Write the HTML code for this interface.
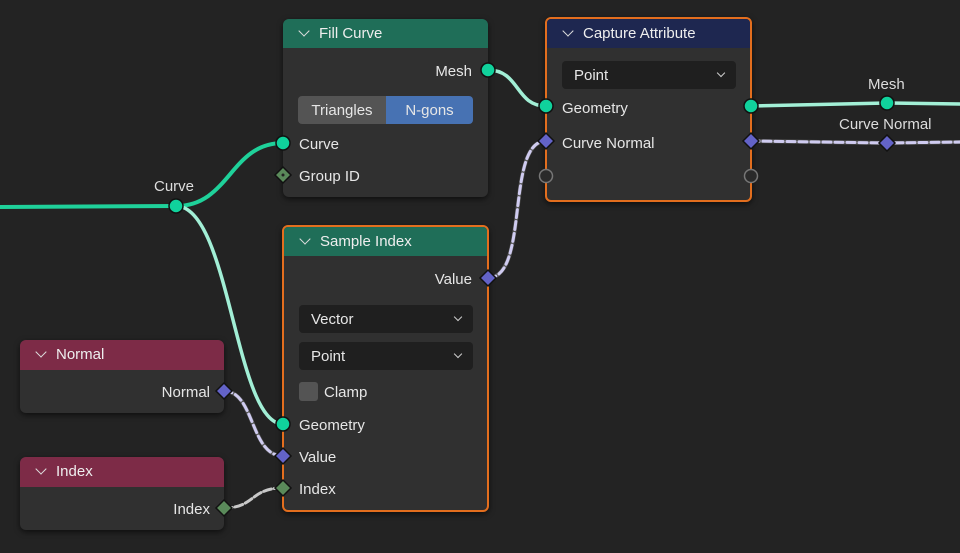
<!DOCTYPE html>
<html><head><style>
body{margin:0;width:960px;height:553px;background:#232323;overflow:hidden;position:relative;font-family:"Liberation Sans","DejaVu Sans",sans-serif;font-size:15px;color:#e6e6e6}
.node{position:absolute;background:#303030;border-radius:6px;box-shadow:0 2px 6px rgba(0,0,0,.6);overflow:hidden;box-sizing:border-box}
.sel{border:2px solid #e36e1e}
.hd{height:29px;line-height:30px;padding-left:36px;position:relative;color:#eee}
.hd:before{content:"";position:absolute;left:17px;top:8px;width:7px;height:7px;border-right:1.5px solid #ddd;border-bottom:1.5px solid #ddd;transform:rotate(45deg)}
.t{position:absolute;white-space:nowrap;margin-top:1px}
.r{text-align:right}
.dd{position:absolute;background:#1f1f1f;border-radius:4px;height:28px;line-height:28px;padding-left:12px;box-sizing:border-box}
.dd:after{content:"";position:absolute;right:12px;top:9px;width:5px;height:5px;border-right:1.5px solid #ccc;border-bottom:1.5px solid #ccc;transform:rotate(45deg)}
</style></head><body>
<svg width="960" height="553" style="position:absolute;left:0;top:0">
<g fill="none" stroke-linecap="round">
<path d="M0,207 L176,206" stroke="#1fd19a" stroke-width="4"/>
<path d="M176,206 C230,206 230,143 283,143" stroke="#1fd19a" stroke-width="4"/>
<path d="M176,206 C230,206 235,424 283,424" stroke="#a2efd6" stroke-width="3.5"/>
<path d="M488,70 C520,70 515,106 546,106" stroke="#a2efd6" stroke-width="3.5"/>
<path d="M751,106 L887,103 L960,104" stroke="#a2efd6" stroke-width="3.5"/>
<path d="M488,278 C530,278 505,141 546,141" stroke="#555" stroke-width="4"/>
<path d="M488,278 C530,278 505,141 546,141" stroke="#cfcbf0" stroke-width="3" stroke-dasharray="8 4"/>
<path d="M751,141 L887,143 L960,142" stroke="#555" stroke-width="4"/>
<path d="M751,141 L887,143 L960,142" stroke="#cfcbf0" stroke-width="3" stroke-dasharray="8 4"/>
<path d="M224,391 C255,391 250,456 283,456" stroke="#555" stroke-width="4"/>
<path d="M224,391 C255,391 250,456 283,456" stroke="#cfcbf0" stroke-width="3" stroke-dasharray="8 4"/>
<path d="M224,508 C255,508 250,488 283,488" stroke="#c8c8c8" stroke-width="3" stroke-dasharray="8 3"/>
</g>
</svg>

<div class="t" style="left:154px;top:177px;color:#ddd">Curve</div>
<div class="t" style="left:868px;top:75px;color:#ddd">Mesh</div>
<div class="t" style="left:839px;top:115px;color:#ddd">Curve Normal</div>

<div class="node" style="left:283px;top:19px;width:205px;height:178px">
<div class="hd" style="background:#1f6e58">Fill Curve</div>
<div class="t r" style="right:16px;top:43px">Mesh</div>
<div style="position:absolute;left:15px;top:77px;width:175px;height:28px;border-radius:4px;overflow:hidden;display:flex">
<div style="width:88px;background:#545454;text-align:center;line-height:29px">Triangles</div>
<div style="flex:1;background:#4772b3;text-align:center;line-height:29px">N-gons</div></div>
<div class="t" style="left:16px;top:116px">Curve</div>
<div class="t" style="left:16px;top:148px">Group ID</div>
</div>

<div class="node sel" style="left:545px;top:17px;width:207px;height:185px">
<div class="hd" style="background:#1e2750">Capture Attribute</div>
<div class="dd" style="left:15px;top:42px;width:174px;line-height:29px">Point</div>
<div class="t" style="left:15px;top:80px">Geometry</div>
<div class="t" style="left:15px;top:115px">Curve Normal</div>
</div>

<div class="node sel" style="left:282px;top:225px;width:207px;height:287px">
<div class="hd" style="background:#1f6e58">Sample Index</div>
<div class="t r" style="right:15px;top:43px">Value</div>
<div class="dd" style="left:15px;top:78px;width:174px;line-height:29px">Vector</div>
<div class="dd" style="left:15px;top:115px;width:174px;line-height:29px">Point</div>
<div style="position:absolute;left:15px;top:155px;width:19px;height:19px;background:#545454;border-radius:3px"></div>
<div class="t" style="left:40px;top:156px">Clamp</div>
<div class="t" style="left:15px;top:189px">Geometry</div>
<div class="t" style="left:15px;top:221px">Value</div>
<div class="t" style="left:15px;top:253px">Index</div>
</div>

<div class="node" style="left:20px;top:340px;width:204px;height:73px">
<div class="hd" style="background:#7d2b47;height:30px">Normal</div>
<div class="t r" style="right:14px;top:43px">Normal</div>
</div>
<div class="node" style="left:20px;top:457px;width:204px;height:73px">
<div class="hd" style="background:#7d2b47;height:30px">Index</div>
<div class="t r" style="right:14px;top:43px">Index</div>
</div>

<svg width="960" height="553" style="position:absolute;left:0;top:0">
<g stroke="#111" stroke-width="1.5">
<g fill="#10d29c">
<circle cx="176" cy="206" r="7"/><circle cx="488" cy="70" r="7"/><circle cx="283" cy="143" r="7"/>
<circle cx="546" cy="106" r="7"/><circle cx="751" cy="106" r="7"/><circle cx="887" cy="103" r="7"/>
<circle cx="283" cy="424" r="7"/>
</g>
<g fill="#6363c8">
<path d="M546,133 l8,8 -8,8 -8,-8z"/><path d="M751,133 l8,8 -8,8 -8,-8z"/><path d="M887,135 l8,8 -8,8 -8,-8z"/>
<path d="M488,270 l8,8 -8,8 -8,-8z"/><path d="M283,448 l8,8 -8,8 -8,-8z"/><path d="M224,383 l8,8 -8,8 -8,-8z"/>
</g>
<g fill="#5a8a5a">
<path d="M283,167 l8,8 -8,8 -8,-8z"/><path d="M283,480 l8,8 -8,8 -8,-8z"/><path d="M224,500 l8,8 -8,8 -8,-8z"/>
</g>
<g fill="#2a2a2a" stroke="#777">
<circle cx="546" cy="176" r="6.5"/><circle cx="751" cy="176" r="6.5"/>
</g>
</g>
<circle cx="283" cy="175" r="1.5" fill="#222"/>
</svg>
</body></html>
